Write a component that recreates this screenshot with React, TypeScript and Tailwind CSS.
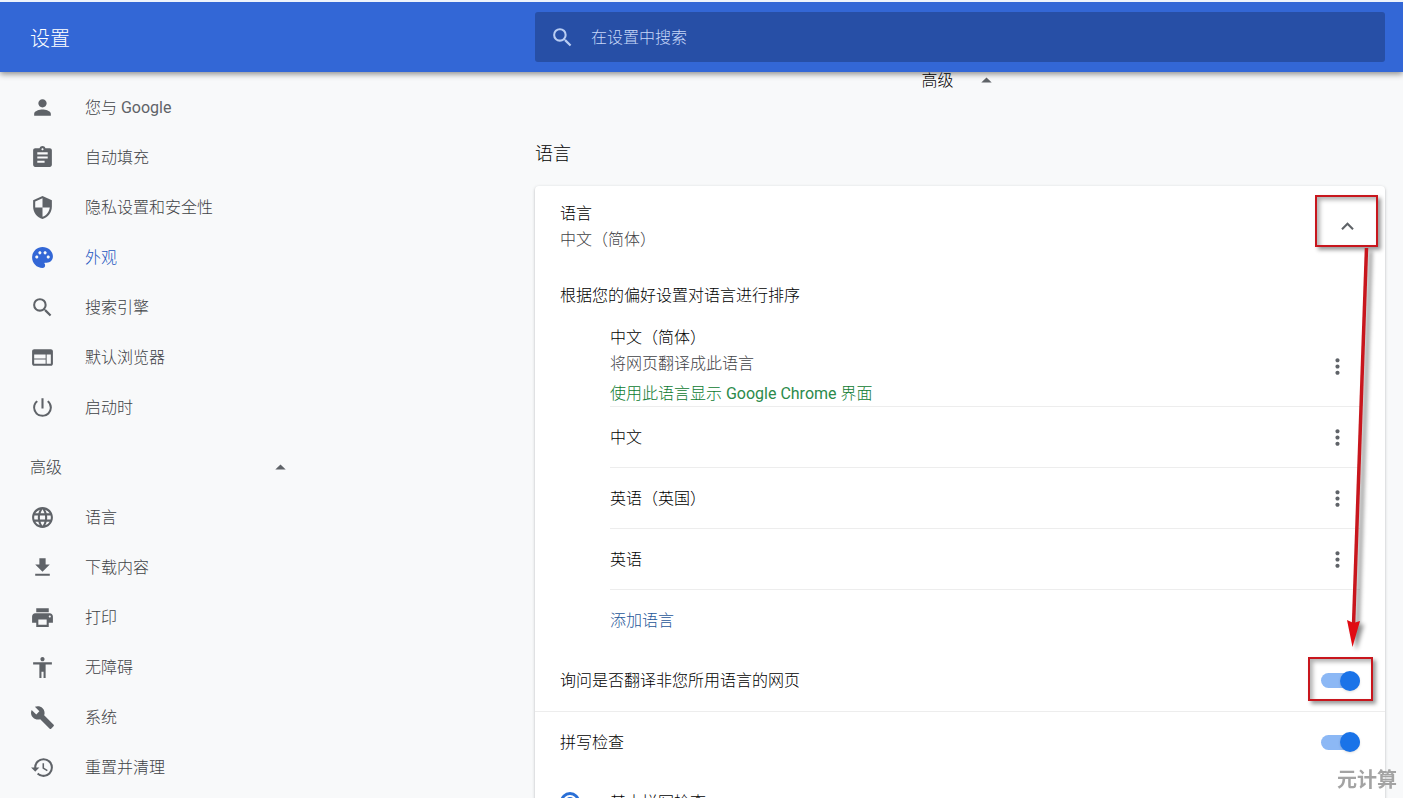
import { useState } from 'react'
import type { ReactNode } from 'react'
import type { IconType } from 'react-icons'
import {
  MdAccessibility,
  MdArrowDropUp,
  MdAssignment,
  MdBuild,
  MdExpandLess,
  MdFileDownload,
  MdHistory,
  MdLanguage,
  MdMoreVert,
  MdPalette,
  MdPerson,
  MdPowerSettingsNew,
  MdPrint,
  MdSearch,
  MdSecurity,
  MdWeb,
} from 'react-icons/md'

type NavItem = { icon: IconType; label: ReactNode; active?: boolean }

const basicItems: NavItem[] = [
  {
    icon: MdPerson,
    // CJK text is set light, latin words keep the regular weight
    label: (
      <>
        您与 <span className="font-normal text-[#5f6368]">Google</span>
      </>
    ),
  },
  { icon: MdAssignment, label: '自动填充' },
  { icon: MdSecurity, label: '隐私设置和安全性' },
  { icon: MdPalette, label: '外观', active: true },
  { icon: MdSearch, label: '搜索引擎' },
  { icon: MdWeb, label: '默认浏览器' },
  { icon: MdPowerSettingsNew, label: '启动时' },
]

const advancedItems: NavItem[] = [
  { icon: MdLanguage, label: '语言' },
  { icon: MdFileDownload, label: '下载内容' },
  { icon: MdPrint, label: '打印' },
  { icon: MdAccessibility, label: '无障碍' },
  { icon: MdBuild, label: '系统' },
  { icon: MdHistory, label: '重置并清理' },
]

const languages = ['中文', '英语（英国）', '英语']

const Header = () => (
  <header className="relative z-10 grid h-[72px] shrink-0 grid-cols-[535px_1fr] items-center border-t-2 border-[#eef3fb] bg-[#3367d6] pr-[18px] shadow-[0_2px_6px_rgba(0,0,0,0.45)]">
    <h1 className="pt-1 pl-[30px] text-xl text-white">设置</h1>
    <label className="flex h-[50px] items-center rounded-[3px] bg-[#274fa6] pr-4 pl-[15px]">
      <MdSearch className="size-[25px] text-[#b9cdf3]" aria-hidden />
      <input
        type="search"
        aria-label="在设置中搜索"
        placeholder="在设置中搜索"
        className="ml-4 flex-1 bg-transparent pt-0.5 text-base text-white outline-none placeholder:text-[#c6d7f8]"
      />
    </label>
  </header>
)

const NavList = ({ items }: { items: NavItem[] }) => (
  <ul>
    {items.map(({ icon: Icon, label, active }, i) => (
      <li key={i}>
        <a
          href="#"
          className={`flex h-[50px] items-center gap-[30px] pl-[30px] ${active ? 'text-[#2557c0]' : 'text-[#3f4246]'}`}
        >
          <Icon className={`size-[25px] ${active ? 'text-[#3367d6]' : 'text-[#5f6368]'}`} aria-hidden />
          <span className="pt-0.5">{label}</span>
        </a>
      </li>
    ))}
  </ul>
)

const Sidebar = () => (
  <nav className="pt-[10px]">
    <NavList items={basicItems} />
    <button
      type="button"
      className="mt-[10px] flex h-[50px] w-[293px] items-center justify-between pl-[30px] text-[#3f4246]"
    >
      <span className="pt-0.5">高级</span>
      <MdArrowDropUp className="size-[25px] text-[#5f6368]" aria-hidden />
    </button>
    <NavList items={advancedItems} />
  </nav>
)

const Toggle = ({ id }: { id: string }) => {
  const [on, setOn] = useState(true)
  return (
    <input
      id={id}
      type="checkbox"
      role="switch"
      checked={on}
      onChange={() => setOn(!on)}
      className="flex h-[15px] w-[39px] appearance-none items-center rounded-full bg-gray-400 before:size-5 before:shrink-0 before:rounded-full before:bg-white before:shadow checked:justify-end checked:bg-[#8cb8f5] checked:before:bg-[#1a73e8]"
    />
  )
}

const MoreButton = ({ label }: { label: string }) => (
  <button type="button" aria-label={label} className="mr-[10px] text-[#5f6368]">
    <MdMoreVert className="size-[25px]" aria-hidden />
  </button>
)

// red boxes and the arrow that joins them
const Markers = () => (
  <div className="pointer-events-none absolute top-0 right-0">
    <div className="absolute top-[9px] right-[7px] h-[52px] w-[63px] border-2 border-[#c8161d] shadow-[3px_3px_4px_rgba(0,0,0,0.4),inset_3px_3px_4px_rgba(0,0,0,0.3)]" />
    <div className="absolute top-[471px] right-[12px] h-[44px] w-[65px] border-2 border-[#c8161d] shadow-[3px_3px_4px_rgba(0,0,0,0.4),inset_3px_3px_4px_rgba(0,0,0,0.3)]" />
    <svg
      className="absolute top-[62px] right-0 h-[405px] w-[50px] drop-shadow-[4px_3px_2px_rgba(0,0,0,0.45)]"
      viewBox="0 0 50 405"
      aria-hidden
    >
      <path d="M31.500 0 L18.500 378" stroke="#c8161d" strokeWidth="3.500" fill="none" />
      <path d="M12 372 L18.500 375 L25 373 L17.500 399 Z" fill="#e00b12" />
    </svg>
  </div>
)

const LanguageCard = () => (
  <section className="relative mt-[18px] rounded-[4px] bg-white text-black shadow-[0_1px_3px_rgba(60,64,67,0.35)]">
    <div className="flex h-20 items-center justify-between px-[25px]">
      <div className="pt-0.5 leading-[26px]">
        <div>语言</div>
        <div className="text-[#3f4246]">中文（简体）</div>
      </div>
      <button type="button" aria-label="收起" className="text-[#5f6368]">
        <MdExpandLess className="size-[25px]" aria-hidden />
      </button>
    </div>

    <h3 className="pl-[25px] leading-[60px]">根据您的偏好设置对语言进行排序</h3>

    <ul className="pr-[25px] pl-[75px]">
      <li className="flex h-[81px] items-center justify-between border-b border-[#ededed]">
        <div className="leading-[26px]">
          <div>中文（简体）</div>
          <div className="text-[#3f4246]">将网页翻译成此语言</div>
          <div className="mt-1 text-[#0c7a2f]">
            使用此语言显示 <span className="font-normal text-[#2b8a4b]">Google Chrome</span> 界面
          </div>
        </div>
        <MoreButton label="中文（简体）" />
      </li>
      {languages.map((lang) => (
        <li key={lang} className="flex h-[61px] items-center justify-between border-b border-[#ededed]">
          <span className="pt-0.5">{lang}</span>
          <MoreButton label={lang} />
        </li>
      ))}
      <li className="flex h-[60px] items-center">
        <a href="#" className="pt-0.5 text-[#1f5799]">
          添加语言
        </a>
      </li>
    </ul>

    <div className="flex h-[62px] items-center justify-between border-b border-[#ededed] px-[25px]">
      <label htmlFor="translate">询问是否翻译非您所用语言的网页</label>
      <Toggle id="translate" />
    </div>
    <div className="flex h-[60px] items-center justify-between px-[25px]">
      <label htmlFor="spellcheck" className="pt-0.5">
        拼写检查
      </label>
      <Toggle id="spellcheck" />
    </div>
    <label className="flex h-[60px] items-center gap-[30px] px-[25px]">
      <input
        type="radio"
        name="spelling"
        defaultChecked
        className="flex size-5 appearance-none items-center justify-center rounded-full border-[3px] border-[#2a6fd6] before:size-2.5 before:rounded-full checked:before:bg-[#2a6fd6]"
      />
      <span className="pt-0.5">基本拼写检查</span>
    </label>
    <Markers />
  </section>
)

const App = () => {
  return (
    <div className="flex h-screen flex-col overflow-hidden bg-[#f8f9fa] font-[Roboto,'Noto_Sans_CJK_SC',sans-serif] text-base font-light">
      <Header />
      <div className="grid grid-cols-[535px_1fr] pr-[18px]">
        <Sidebar />
        <main>
          <button type="button" className="mx-auto flex h-4 items-center gap-5 text-black">
            <span className="pt-0.5">高级</span>
            <MdArrowDropUp className="size-[25px] text-[#5f6368]" aria-hidden />
          </button>
          <h2 className="mt-[52px] text-lg text-black">语言</h2>
          <LanguageCard />
        </main>
      </div>
      <div className="pointer-events-none fixed right-[6px] bottom-[4px] z-20 text-xl font-bold text-[#a3a3a3]">元计算</div>
    </div>
  )
}

export default App
